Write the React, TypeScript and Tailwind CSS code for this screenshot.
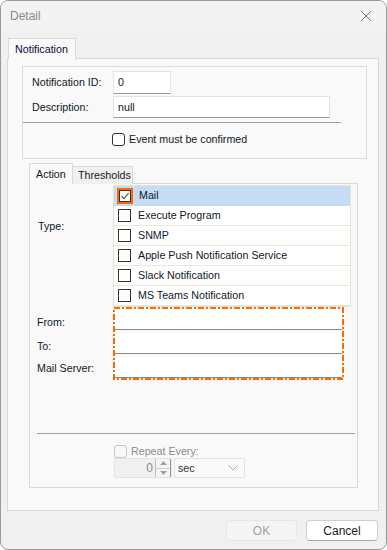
import React from "react";

const font = { fontFamily: '"Liberation Sans", Arial, sans-serif' };

function Box({ checked, focus, disabled }: { checked?: boolean; focus?: boolean; disabled?: boolean }) {
  if (focus) {
    return (
      <div className="w-[16px] h-[16px] border-2 border-[#ff6a00] flex items-center justify-center bg-white">
        <div className="w-[12px] h-[12px] border border-[#333] flex items-center justify-center">
          {checked && (
            <svg width="10" height="10" viewBox="0 0 10 10">
              <path d="M1.5 5.2 L4 7.6 L8.6 2.2" fill="none" stroke="#555" strokeWidth="1.2" />
            </svg>
          )}
        </div>
      </div>
    );
  }
  return (
    <div
      className={
        disabled
          ? "w-[13px] h-[13px] rounded-[3px] border border-[#c4c4c4] bg-[#f8f8f8]"
          : "w-[13px] h-[13px] border border-[#333] bg-white"
      }
    />
  );
}

const types = [
  "Mail",
  "Execute Program",
  "SNMP",
  "Apple Push Notification Service",
  "Slack Notification",
  "MS Teams Notification",
];

function Field() {
  return <div className="h-[21px] w-full bg-white border-b border-[#8a8a8a]" />;
}

export default function App() {
  return (
    <div
      className="w-[387px] h-[550px] bg-[#f0f0f0] border border-[#9a9a9a] rounded-[8px] overflow-hidden text-[10.7px] text-[#111827]"
      style={font}
    >
      <div className="h-[30px] bg-[#f3f3f3] flex items-center justify-between pl-[9px] pr-[14px]">
        <span className="text-[12px] text-[#8a8a8a]">Detail</span>
        <svg width="12" height="12" viewBox="0 0 12 12">
          <path d="M1 1 L11 11 M11 1 L1 11" stroke="#7a7a7a" strokeWidth="1" />
        </svg>
      </div>

      <div className="pl-[6px] pt-[7px]">
        <div className="flex">
          <div className="ml-[1px] w-[68px] h-[21px] bg-[#f9f9f9] border border-b-0 border-[#d9d9d9] flex items-center pl-[6px] text-[#0a0a3a]">
            Notification
          </div>
        </div>
        <div className="w-[372px] h-[453px] bg-[#f9f9f9] border border-[#d9d9d9] -mt-px">
          {/* group box */}
          <div className="ml-[14px] mt-[7px] w-[345px] h-[93px] border border-[#dcdcdc]">
            <div className="mt-[4px] h-[23px] flex items-center">
              <div className="w-[90px] pl-[9px]">Notification ID:</div>
              <div className="w-[58px] h-[23px] bg-white border border-[#e3e3e3] border-b-[#9a9a9a] pl-[4px] pt-[2px]">0</div>
            </div>
            <div className="mt-[2px] h-[22px] flex items-center">
              <div className="w-[90px] pl-[9px]">Description:</div>
              <div className="w-[217px] h-[22px] bg-white border border-[#e3e3e3] border-b-[#9a9a9a] pl-[4px] pt-[2px]">null</div>
            </div>
            <div className="mt-[4px] h-px w-[318px] bg-[#a0a0a0]" />
            <div className="mt-[8px] ml-[89px] flex items-center gap-[4px]">
              <div className="w-[13px] h-[13px] rounded-[3px] border border-[#333] bg-white" />
              <span>Event must be confirmed</span>
            </div>
          </div>

          {/* inner tabs */}
          <div className="mt-[4px] ml-[21px] flex items-end">
            <div className="w-[44px] h-[21px] bg-[#f9f9f9] border border-b-0 border-[#d9d9d9] flex items-center pl-[6px] relative z-10">
              Action
            </div>
            <div className="w-[60px] h-[18px] bg-[#f0f0f0] border border-b-0 border-l-0 border-[#d9d9d9] flex items-center pl-[5px]">
              Thresholds
            </div>
          </div>
          <div className="ml-[21px] w-[329px] h-[305px] border border-[#d9d9d9] -mt-px">
            <div className="flex mt-[1px]">
              <div className="w-[83px] pl-[8px] pt-[33px]">Type:</div>
              <div className="w-[238px] border border-[#e6e3d3] bg-white">
                {types.map((t, i) => (
                  <div
                    key={t}
                    className={
                      i === 0
                        ? "h-[20px] flex items-center pl-[3px] gap-[6px] bg-[#c4dcf5] border-b border-[#c4dcf5]"
                        : "h-[20px] flex items-center pl-[4px] gap-[7px] border-b border-[#ebe8d8]"
                    }
                  >
                    {i === 0 ? <Box checked focus /> : <Box />}
                    <span>{t}</span>
                  </div>
                ))}
              </div>
            </div>

            <div className="flex">
              <div className="w-[83px] pl-[7px] flex flex-col">
                <div className="mt-[7px] h-[16px] leading-[16px]">From:</div>
                <div className="mt-[8px] h-[16px] leading-[16px]">To:</div>
                <div className="mt-[6px] h-[16px] leading-[16px]">Mail Server:</div>
              </div>
              <div className="relative w-[231px] h-[73px] p-[2px] flex flex-col gap-[3px]">
                <Field />
                <Field />
                <Field />
                <svg className="absolute inset-0" width="231" height="73">
                  <rect x="1" y="1" width="229" height="71" fill="none" stroke="#ff6a00" strokeWidth="2" strokeDasharray="6 2 2 2" />
                </svg>
              </div>
            </div>

            <div className="mt-[53px] ml-[7px] w-[318px] h-px bg-[#a0a0a0]" />
            <div className="mt-[10px] ml-[84px] h-[14px] flex items-center gap-[4px] text-[#8c8c8c]">
              <Box disabled />
              <span>Repeat Every:</span>
            </div>
            <div className="ml-[84px] flex">
              <div className="w-[58px] h-[20px] flex border border-[#e3e3e3] bg-[#f0f0f0]">
                <div className="flex-1 flex items-center justify-end pr-[2px] text-[12px] text-[#8c8c8c]">0</div>
                <div className="w-[16px] flex flex-col border-l border-r border-[#bdbdbd] border-r-[#9a9a9a]">
                  <div className="flex-1 flex items-center justify-center border-b border-[#d0d0d0] bg-[#f5f5f5]">
                    <svg width="7" height="4" viewBox="0 0 7 4"><path d="M0 4 L3.5 0 L7 4 Z" fill="#a0a0a0" /></svg>
                  </div>
                  <div className="flex-1 flex items-center justify-center bg-[#f5f5f5]">
                    <svg width="7" height="4" viewBox="0 0 7 4"><path d="M0 0 L3.5 4 L7 0 Z" fill="#a0a0a0" /></svg>
                  </div>
                </div>
              </div>
              <div className="ml-[2px] w-[71px] h-[20px] border border-[#e3e3e3] bg-[#fafafa] flex items-center justify-between pl-[3px] pr-[6px] text-[#333]">
                <span>sec</span>
                <svg width="10" height="6" viewBox="0 0 10 6"><path d="M0.5 0.5 L5 5 L9.5 0.5" fill="none" stroke="#a8a8a8" strokeWidth="1" /></svg>
              </div>
            </div>
          </div>
        </div>

        <div className="mt-[9px] flex">
          <div className="ml-[219px] w-[71px] h-[21px] rounded-[4px] border border-[#e6e6e6] bg-[#f5f5f5] flex items-center justify-center text-[12px] text-[#a0a0a0]">
            OK
          </div>
          <div className="ml-[9px] w-[72px] h-[21px] rounded-[4px] border border-[#cfcfcf] border-b-[#a8a8a8] bg-white flex items-center justify-center text-[12px] text-[#1a1a1a]">
            Cancel
          </div>
        </div>
      </div>
    </div>
  );
}
